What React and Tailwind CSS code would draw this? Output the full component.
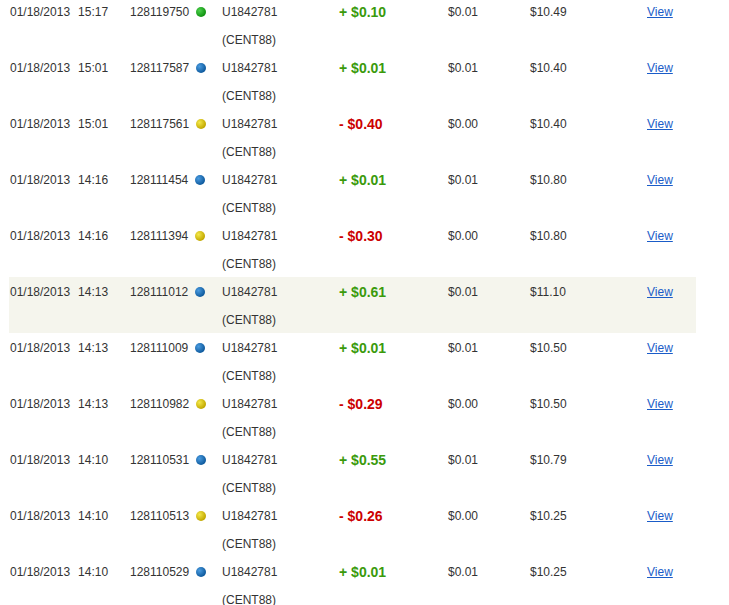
import React from "react";

const rows = [
  ["15:17", "128119750", "g", "+", "0.10", "0.01", "10.49"],
  ["15:01", "128117587", "b", "+", "0.01", "0.01", "10.40"],
  ["15:01", "128117561", "y", "-", "0.40", "0.00", "10.40"],
  ["14:16", "128111454", "b", "+", "0.01", "0.01", "10.80"],
  ["14:16", "128111394", "y", "-", "0.30", "0.00", "10.80"],
  ["14:13", "128111012", "b", "+", "0.61", "0.01", "11.10"],
  ["14:13", "128111009", "b", "+", "0.01", "0.01", "10.50"],
  ["14:13", "128110982", "y", "-", "0.29", "0.00", "10.50"],
  ["14:10", "128110531", "b", "+", "0.55", "0.01", "10.79"],
  ["14:10", "128110513", "y", "-", "0.26", "0.00", "10.25"],
  ["14:10", "128110529", "b", "+", "0.01", "0.01", "10.25"],
];

function Dot({ c }) {
  const cls =
    c === "g"
      ? "bg-[radial-gradient(circle_at_35%_35%,#4cd04c,#119311_70%)]"
      : c === "b"
      ? "bg-[radial-gradient(circle_at_35%_35%,#4a9be0,#0f5b9e_70%)]"
      : "bg-[radial-gradient(circle_at_35%_35%,#f4e84a,#c2a800_70%)]";
  return <span className={`inline-block w-[10px] h-[10px] rounded-full ml-[7px] ${cls}`} />;
}

export default function App() {
  return (
    <div className="h-[605px] w-[729px] overflow-hidden bg-white font-['Liberation_Sans',Arial,sans-serif] text-[12px] text-[#333333]">
      <div className="-mt-[3px] ml-[9px] w-[687px] flex flex-col">
        {rows.map((r, i) => (
          <div
            key={i}
            className={`grid grid-cols-[121px_92px_117px_109px_82px_117px_49px] h-[56px] pt-px leading-[28px] ${
              i === 5 ? "bg-[#f5f5ed]" : ""
            }`}
          >
            <div className="whitespace-nowrap pl-px">
              <span>01/18/2013</span>
              <span className="ml-[8px]">{r[0]}</span>
            </div>
            <div className="flex items-start">
              <span className="flex items-center h-[28px]">
                {r[1]}
                <Dot c={r[2]} />
              </span>
            </div>
            <div className="flex flex-col">
              <span>U1842781</span>
              <span>(CENT88)</span>
            </div>
            <div
              className={`font-bold text-[14px] whitespace-nowrap ${
                r[3] === "+" ? "text-[#3a9a0c]" : "text-[#cc0000]"
              }`}
            >
              {r[3]} ${r[4]}
            </div>
            <div>${r[5]}</div>
            <div>${r[6]}</div>
            <div>
              <a href="#" className="text-[#1a5cc8] underline">
                View
              </a>
            </div>
          </div>
        ))}
      </div>
    </div>
  );
}
